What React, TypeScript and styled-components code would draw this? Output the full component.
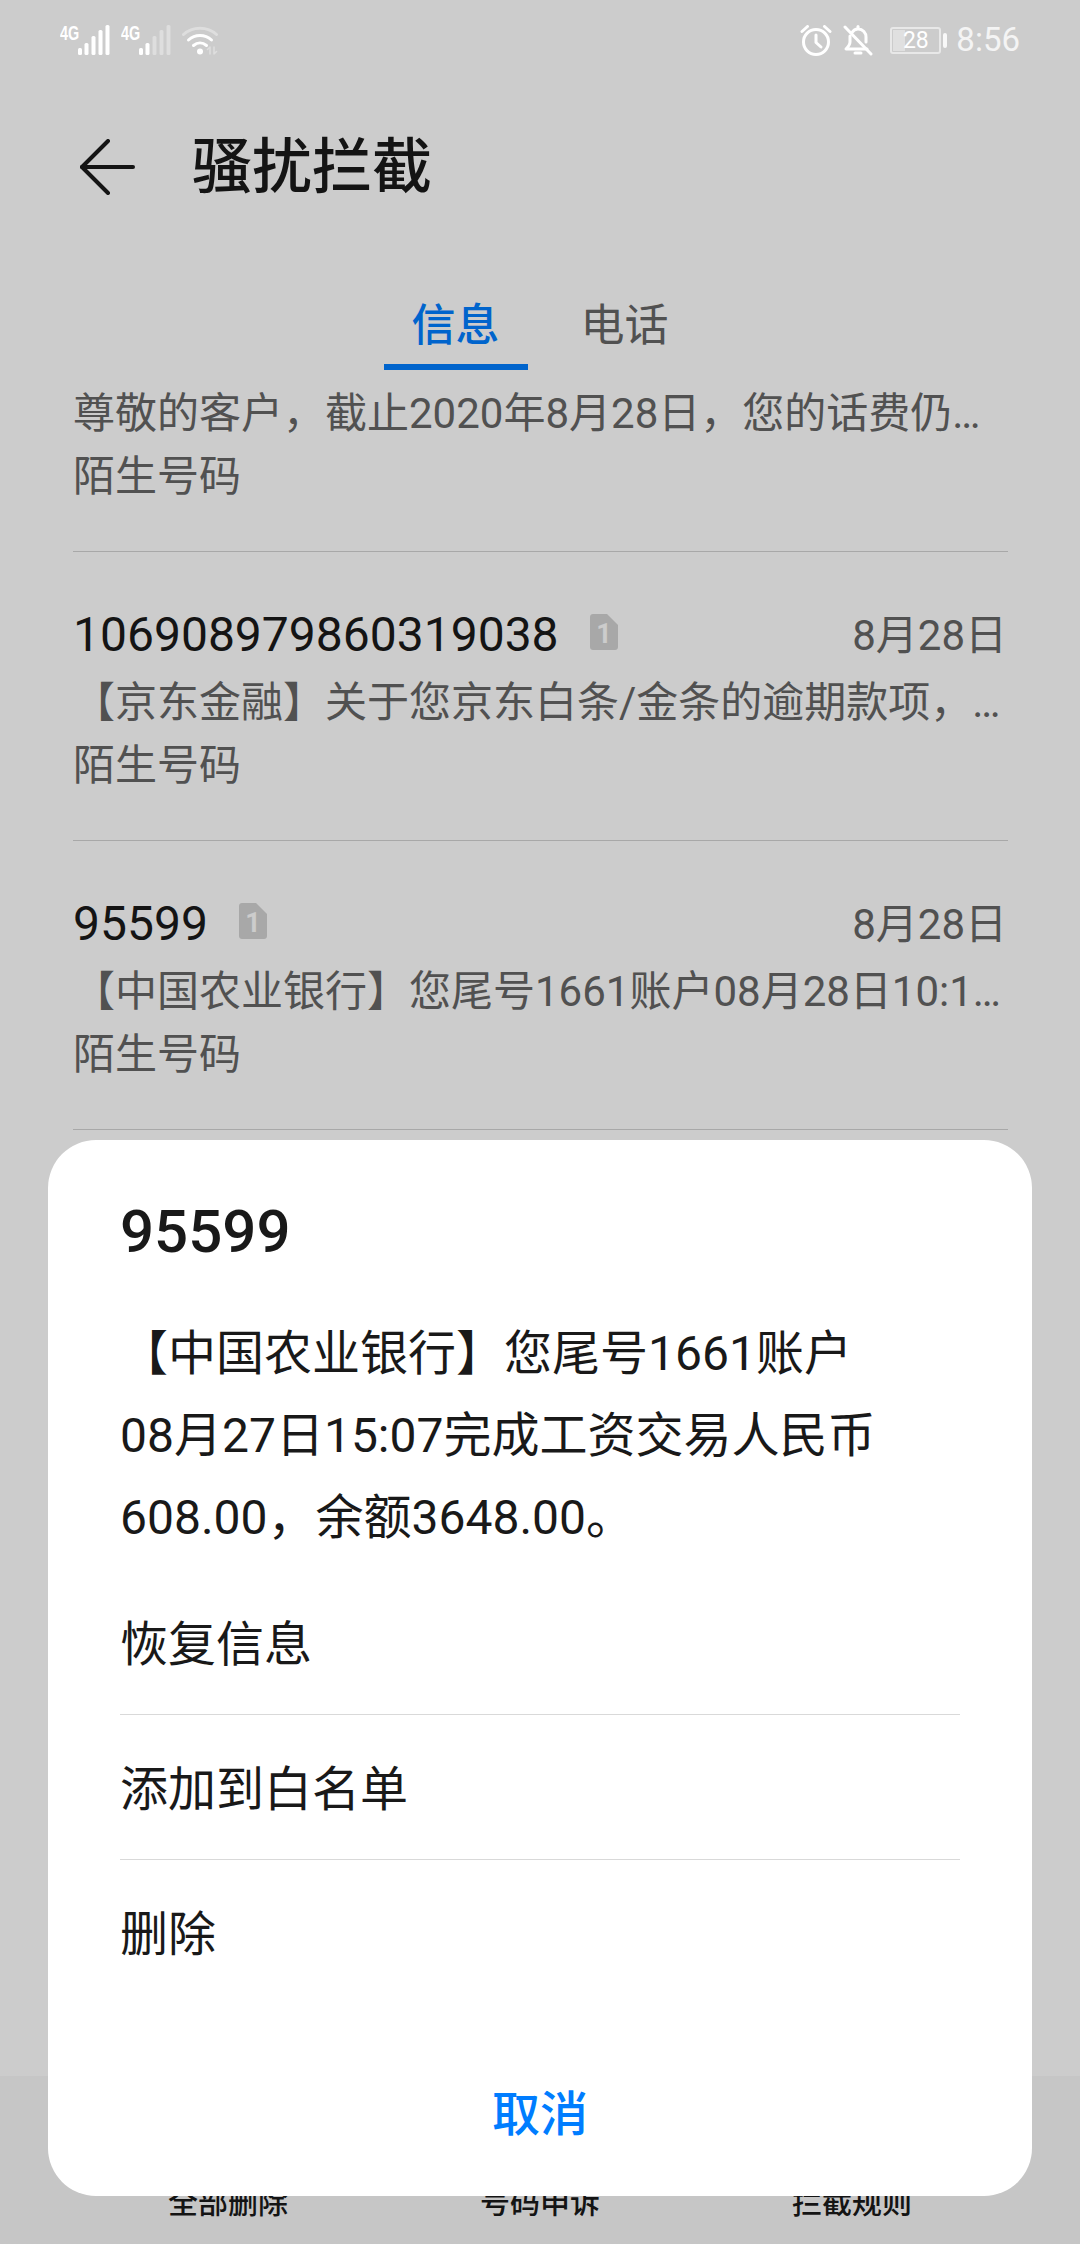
import styled, { createGlobalStyle } from 'styled-components'

const GlobalStyle = createGlobalStyle`
  html, body {
    margin: 0;
    padding: 0;
    background: #fff;
  }

  body {
    font-family: Roboto, 'Noto Sans CJK SC', sans-serif;
  }

  * {
    box-sizing: border-box;
  }
`

const Phone = styled.div`
  position: relative;
  width: 1080px;
  height: 2244px;
  overflow: hidden;
  display: flex;
  flex-direction: column;
  background: #fff;
`

const Scrim = styled.div`
  position: absolute;
  inset: 0;
  z-index: 1;
  background: rgba(0, 0, 0, 0.2);
`

/* ── Status bar ───────────────────────────────────────────── */

const StatusBar = styled.div`
  position: relative;
  z-index: 2;
  height: 80px;
  flex-shrink: 0;
  padding: 25px 60px 0 60px;
  display: flex;
  justify-content: space-between;
  align-items: flex-start;
  color: #fff;
`

const StatusGroup = styled.div`
  display: flex;
  align-items: flex-start;
`

const Signal = styled.div`
  position: relative;
  width: 61px;
  height: 30px;
`

const NetworkType = styled.span`
  position: absolute;
  top: -1px;
  left: 0;
  font-family: 'Liberation Sans', sans-serif;
  font-size: 20px;
  line-height: 18px;
  font-weight: 700;
  transform: scaleX(0.72);
  transform-origin: left center;
`

const SignalBars = styled.svg`
  position: absolute;
  left: 17px;
  top: 0;
`

const Battery = styled.div`
  position: relative;
  width: 51px;
  height: 27px;
  margin: 2px 0 0 17px;
  border: 2px solid rgba(255, 255, 255, 0.55);
  border-radius: 3px;
  display: flex;
  align-items: center;
  justify-content: center;
  font-size: 23px;
  color: #fff;

  &::before {
    content: '';
    position: absolute;
    left: 1px;
    top: 1px;
    bottom: 1px;
    width: 12px;
    background: rgba(255, 255, 255, 0.4);
  }

  &::after {
    content: '';
    position: absolute;
    right: -8px;
    top: 4px;
    width: 4px;
    height: 15px;
    border-radius: 2px;
    background: rgba(255, 255, 255, 0.85);
  }
`

const Clock = styled.span`
  margin: -3px 0 0 15px;
  font-size: 33px;
  line-height: 36px;
  color: #f4f4f4;
`

/* ── Header and tabs ──────────────────────────────────────── */

const Header = styled.header`
  height: 170px;
  flex-shrink: 0;
  padding: 3px 0 0 80px;
  display: flex;
  align-items: center;
  gap: 57px;
`

const BackIcon = styled.svg`
  flex-shrink: 0;
`

const Title = styled.h1`
  margin: 2px 0 0;
  font-size: 60px;
  line-height: 72px;
  font-weight: 500;
  color: #191919;
`

const Tabs = styled.nav`
  height: 120px;
  flex-shrink: 0;
  display: flex;
  justify-content: center;
  gap: 25px;
`

const Tab = styled.div<{ $active?: boolean }>`
  padding: 50px 28px 0;
  height: 120px;
  font-size: 44px;
  line-height: 52px;
  font-weight: ${(p) => (p.$active ? 500 : 400)};
  color: ${(p) => (p.$active ? '#007dff' : '#666')};
  border-bottom: 6px solid ${(p) => (p.$active ? '#007dff' : 'transparent')};
`

/* ── Message list ─────────────────────────────────────────── */

const List = styled.div`
  flex: 1;
  min-height: 0;
  overflow: hidden;
  padding: 0 72px 0 73px;
`

const Row = styled.div<{ $first?: boolean }>`
  padding: ${(p) => (p.$first ? '8px 0 41px' : '49px 0 41px')};
  border-bottom: 1px solid #d3d3d3;
`

const RowHead = styled.div`
  height: 66px;
  display: flex;
  align-items: center;
`

const Sender = styled.span`
  font-size: 48px;
  color: #191919;
`

const SimBadge = styled.svg`
  margin-left: 31px;
  margin-top: -4px;
`

const RowDate = styled.span`
  margin-left: auto;
  margin-top: -5px;
  padding-right: 1px;
  font-size: 42px;
  color: #666;
`

const Preview = styled.div`
  height: 66px;
  padding-top: 6px;
  line-height: 60px;
  font-size: 42px;
  color: #666;
  white-space: nowrap;
  overflow: hidden;
`

const Category = styled.div`
  height: 66px;
  line-height: 66px;
  font-size: 42px;
  color: #666;
`

/* ── Bottom bar ───────────────────────────────────────────── */

const BottomBar = styled.div`
  height: 168px;
  flex-shrink: 0;
  padding-top: 107px;
  background: #f8f8f8;
  display: grid;
  grid-template-columns: repeat(3, 312px);
  justify-content: center;
`

const BottomLabel = styled.span`
  text-align: center;
  font-size: 30px;
  line-height: 40px;
  font-weight: 500;
  color: #191919;
`

/* ── Dialog ───────────────────────────────────────────────── */

const Dialog = styled.div`
  position: absolute;
  z-index: 3;
  left: 48px;
  top: 1140px;
  width: 984px;
  height: 1056px;
  padding: 52px 72px 0;
  border-radius: 48px;
  background: #fff;
`

const DialogTitle = styled.div`
  font-size: 60px;
  line-height: 80px;
  font-weight: 500;
  color: #191919;
`

const DialogBody = styled.div`
  margin-top: 41px;
  font-size: 48px;
  line-height: 82px;
  color: #191919;
`

const BodyLine = styled.div`
  white-space: nowrap;
`

const Options = styled.div`
  margin-top: 10px;
`

const Option = styled.div`
  height: 145px;
  padding-bottom: 4px;
  display: flex;
  align-items: center;
  font-size: 48px;
  color: #191919;

  & + & {
    border-top: 1px solid #d9d9d9;
  }
`

const CancelButton = styled.div`
  margin-top: 81px;
  text-align: center;
  font-size: 48px;
  line-height: 60px;
  font-weight: 500;
  color: #007dff;
`

// ---------------------------------------------------------------------------
// Drawn icons
// ---------------------------------------------------------------------------

function SignalIcon({ strength }: { strength: number }) {
  const bars = [
    { x: 1, h: 7 },
    { x: 7.5, h: 12 },
    { x: 14.5, h: 19 },
    { x: 21.5, h: 25 },
    { x: 28.5, h: 30 },
  ]
  return (
    <SignalBars width="33" height="30" viewBox="0 0 33 30">
      {bars.map((b, i) => (
        <rect
          key={b.x}
          x={b.x}
          y={30 - b.h}
          width="4"
          height={b.h}
          rx="1.5"
          fill="#fff"
          opacity={i < strength ? 1 : 0.35}
        />
      ))}
    </SignalBars>
  )
}

function WifiIcon() {
  return (
    <svg width="38" height="30" viewBox="0 0 38 30" fill="none" stroke="#fff" strokeLinecap="round">
      <path d="M1.5 9.5C10.5 1 25.5 1 34.5 9.5" strokeWidth="3" opacity="0.35" />
      <path d="M6.5 15C13 9 23 9 29.5 15" strokeWidth="3" />
      <path d="M11.5 20.5C15.5 17 20.5 17 24.5 20.5" strokeWidth="3" />
      <circle cx="18" cy="26.5" r="3" fill="#fff" stroke="none" />
      <path d="M28 29V22M25.500 24.500L28 22M32 22V29M32 29L34.500 26.500" strokeWidth="1.600" opacity="0.35" />
    </svg>
  )
}

function AlarmIcon() {
  return (
    <svg width="32" height="31" viewBox="0 0 32 31" fill="none" stroke="#fff" strokeWidth="3" strokeLinecap="round" strokeLinejoin="round">
      <circle cx="16" cy="17" r="12.500" />
      <path d="M16 10V17.500L21 22" />
      <path d="M2 6.500L7.500 1.500M30 6.500L24.500 1.500" />
    </svg>
  )
}

function BellOffIcon() {
  return (
    <svg width="30" height="31" viewBox="0 0 30 31" fill="none" stroke="#fff" strokeWidth="3" strokeLinecap="round" strokeLinejoin="round" style={{ marginLeft: 11 }}>
      <path d="M9 7.500C10.500 5 12.500 4 15 4C20 4 23 8 23 12V17" />
      <path d="M7 11V17C7 20 5.500 21.500 3 24H24" />
      <path d="M12 28H18" />
      <path d="M15 1.500V3" />
      <path d="M2 2L28 29" />
    </svg>
  )
}

function BackArrow() {
  return (
    <BackIcon width="55" height="56" viewBox="0 0 55 56" fill="none" stroke="#191919" strokeWidth="4" strokeLinecap="round" strokeLinejoin="round">
      <path d="M28 2L2 28L28 54" />
      <path d="M2 28H53" />
    </BackIcon>
  )
}

function SimIcon() {
  return (
    <SimBadge width="28" height="36" viewBox="0 0 28 36">
      <path
        d="M3 0H17L28 11V33C28 34.700 26.700 36 25 36H3C1.300 36 0 34.700 0 33V3C0 1.300 1.300 0 3 0Z"
        fill="#d2d2d2"
      />
      <text x="14" y="29" textAnchor="middle" fontFamily="Roboto, sans-serif" fontSize="27" fontWeight="700" fill="#fff">
        1
      </text>
    </SimBadge>
  )
}

// ---------------------------------------------------------------------------
// Data
// ---------------------------------------------------------------------------

const messages = [
  { sender: '106908979860319038', date: '8月28日', text: '【京东金融】关于您京东白条/金条的逾期款项，…' },
  { sender: '95599', date: '8月28日', text: '【中国农业银行】您尾号1661账户08月28日10:1…' },
]

const bodyLines = [
  '【中国农业银行】您尾号1661账户',
  '08月27日15:07完成工资交易人民币',
  '608.00，余额3648.00。',
]

const options = ['恢复信息', '添加到白名单', '删除']

const bottomActions = ['全部删除', '号码申诉', '拦截规则']

// ---------------------------------------------------------------------------
// Component
// ---------------------------------------------------------------------------

export default function App() {
  return (
    <Phone>
      <GlobalStyle />

      <StatusBar>
        <StatusGroup>
          <Signal>
            <NetworkType>4G</NetworkType>
            <SignalIcon strength={5} />
          </Signal>
          <Signal>
            <NetworkType>4G</NetworkType>
            <SignalIcon strength={2} />
          </Signal>
          <WifiIcon />
        </StatusGroup>
        <StatusGroup>
          <AlarmIcon />
          <BellOffIcon />
          <Battery>28</Battery>
          <Clock>8:56</Clock>
        </StatusGroup>
      </StatusBar>

      <Header>
        <BackArrow />
        <Title>骚扰拦截</Title>
      </Header>

      <Tabs>
        <Tab $active>信息</Tab>
        <Tab>电话</Tab>
      </Tabs>

      <List>
        <Row $first>
          <Preview>尊敬的客户，截止2020年8月28日，您的话费仍…</Preview>
          <Category>陌生号码</Category>
        </Row>
        {messages.map((m) => (
          <Row key={m.sender}>
            <RowHead>
              <Sender>{m.sender}</Sender>
              <SimIcon />
              <RowDate>{m.date}</RowDate>
            </RowHead>
            <Preview>{m.text}</Preview>
            <Category>陌生号码</Category>
          </Row>
        ))}
      </List>

      <BottomBar>
        {bottomActions.map((label) => (
          <BottomLabel key={label}>{label}</BottomLabel>
        ))}
      </BottomBar>

      <Scrim />

      <Dialog>
        <DialogTitle>95599</DialogTitle>
        <DialogBody>
          {bodyLines.map((line) => (
            <BodyLine key={line}>{line}</BodyLine>
          ))}
        </DialogBody>
        <Options>
          {options.map((label) => (
            <Option key={label}>{label}</Option>
          ))}
        </Options>
        <CancelButton>取消</CancelButton>
      </Dialog>
    </Phone>
  )
}
